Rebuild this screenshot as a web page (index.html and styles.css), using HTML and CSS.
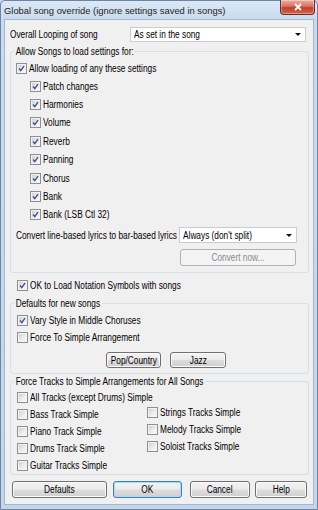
FILE: index.html
```html
<!DOCTYPE html>
<html lang="en">
<head>
    <meta charset="UTF-8">
    <title>Global song override</title>
    <link rel="stylesheet" href="styles.css">
</head>
<body>
    <div class="window">
        <div class="titlebar">
            <span class="title">Global song override (ignore settings saved in songs)</span>
            <span class="close">
                <svg viewBox="0 0 10 8" width="10" height="8"><path d="M2 1 L8 7 M8 1 L2 7"/></svg>
            </span>
        </div>

        <div class="client">
            <div class="row looping">
                <span class="t">Overall Looping of song</span>
                <div class="combo combo-looping"><span class="t">As set in the song</span><i class="arrow"></i></div>
            </div>

            <!-- Allow songs to load settings -->
            <div class="group group-allow">
                <div class="group-title"><span class="t">Allow Songs to load settings for:</span></div>
                <label class="check"><span class="box checked"><svg viewBox="0 0 11 11"><path d="M2.5 5.5 L4.6 8 L8.6 2.6"/></svg></span><span class="t">Allow loading of any these settings</span></label>
                <div class="sublist">
                    <label class="check"><span class="box checked"><svg viewBox="0 0 11 11"><path d="M2.5 5.5 L4.6 8 L8.6 2.6"/></svg></span><span class="t">Patch changes</span></label>
                    <label class="check"><span class="box checked"><svg viewBox="0 0 11 11"><path d="M2.5 5.5 L4.6 8 L8.6 2.6"/></svg></span><span class="t">Harmonies</span></label>
                    <label class="check"><span class="box checked"><svg viewBox="0 0 11 11"><path d="M2.5 5.5 L4.6 8 L8.6 2.6"/></svg></span><span class="t">Volume</span></label>
                    <label class="check"><span class="box checked"><svg viewBox="0 0 11 11"><path d="M2.5 5.5 L4.6 8 L8.6 2.6"/></svg></span><span class="t">Reverb</span></label>
                    <label class="check"><span class="box checked"><svg viewBox="0 0 11 11"><path d="M2.5 5.5 L4.6 8 L8.6 2.6"/></svg></span><span class="t">Panning</span></label>
                    <label class="check"><span class="box checked"><svg viewBox="0 0 11 11"><path d="M2.5 5.5 L4.6 8 L8.6 2.6"/></svg></span><span class="t">Chorus</span></label>
                    <label class="check"><span class="box checked"><svg viewBox="0 0 11 11"><path d="M2.5 5.5 L4.6 8 L8.6 2.6"/></svg></span><span class="t">Bank</span></label>
                    <label class="check"><span class="box checked"><svg viewBox="0 0 11 11"><path d="M2.5 5.5 L4.6 8 L8.6 2.6"/></svg></span><span class="t">Bank (LSB Ctl 32)</span></label>
                </div>
                <div class="row convert">
                    <span class="t">Convert line-based lyrics to bar-based lyrics</span>
                    <div class="combo combo-lyrics"><span class="t">Always (don't split)</span><i class="arrow"></i></div>
                </div>
                <div class="row convert-now">
                    <span class="btn disabled"><span class="t">Convert now...</span></span>
                </div>
            </div>

            <label class="check notation"><span class="box checked"><svg viewBox="0 0 11 11"><path d="M2.5 5.5 L4.6 8 L8.6 2.6"/></svg></span><span class="t">OK to Load Notation Symbols with songs</span></label>

            <!-- Defaults for new songs -->
            <div class="group group-defaults">
                <div class="group-title"><span class="t">Defaults for new songs</span></div>
                <label class="check"><span class="box checked"><svg viewBox="0 0 11 11"><path d="M2.5 5.5 L4.6 8 L8.6 2.6"/></svg></span><span class="t">Vary Style in Middle Choruses</span></label>
                <label class="check"><span class="box"></span><span class="t">Force To Simple Arrangement</span></label>
                <div class="row style-buttons">
                    <span class="btn btn-pop"><span class="t">Pop/Country</span></span>
                    <span class="btn btn-jazz"><span class="t">Jazz</span></span>
                </div>
            </div>

            <!-- Force tracks -->
            <div class="group group-tracks">
                <div class="group-title"><span class="t">Force Tracks to Simple Arrangements for All Songs</span></div>
                <label class="check"><span class="box"></span><span class="t">All Tracks (except Drums) Simple</span></label>
                <div class="track-cols">
                    <div class="track-col left">
                        <label class="check"><span class="box"></span><span class="t">Bass Track Simple</span></label>
                        <label class="check"><span class="box"></span><span class="t">Piano Track Simple</span></label>
                        <label class="check"><span class="box"></span><span class="t">Drums Track Simple</span></label>
                        <label class="check"><span class="box"></span><span class="t">Guitar Tracks Simple</span></label>
                    </div>
                    <div class="track-col right">
                        <label class="check"><span class="box"></span><span class="t">Strings Tracks Simple</span></label>
                        <label class="check"><span class="box"></span><span class="t">Melody Tracks Simple</span></label>
                        <label class="check"><span class="box"></span><span class="t">Soloist Tracks Simple</span></label>
                    </div>
                </div>
            </div>

            <div class="row footer">
                <span class="btn btn-defaults"><span class="t">Defaults</span></span>
                <span class="btn btn-ok default"><span class="t">OK</span></span>
                <span class="btn btn-cancel"><span class="t">Cancel</span></span>
                <span class="btn btn-help"><span class="t">Help</span></span>
            </div>
        </div>
    </div>
</body>
</html>
```

FILE: styles.css
```css
* {
    box-sizing: border-box;
}

body {
    margin: 0;
    width: 318px;
    height: 510px;
    overflow: hidden;
    background: #c4d7ed;
    font-family: "Liberation Sans", Arial, sans-serif;
    font-size: 10px;
    color: #000;
}

/* Dialog text is a narrow face: squeeze it horizontally */
.t {
    display: inline-block;
    white-space: nowrap;
    transform: scaleX(0.83);
    transform-origin: left center;
}

/* Window frame */
.window {
    position: relative;
    width: 318px;
    height: 510px;
    display: flex;
    flex-direction: column;
    border: 1px solid #6e86a4;
    border-radius: 5px 5px 0 0;
    background: linear-gradient(#dce8f6, #c9dbef 18px, #c3d6ec);
}

.titlebar {
    height: 18px;
    display: flex;
    align-items: center;
    padding-left: 3px;
    font-size: 9.4px;
    color: #1e1e1e;
}

.close {
    position: absolute;
    top: -1px;
    right: 2px;
    width: 35px;
    height: 15px;
    display: flex;
    align-items: center;
    justify-content: center;
    border: 1px solid #6c2a22;
    border-top: none;
    border-radius: 0 0 4px 4px;
    background: linear-gradient(#eab0a3, #d7725f 45%, #c33f29 55%, #d3644b);
    box-shadow: inset 0 0 0 1px rgba(255, 255, 255, 0.35);
}

.close svg path {
    stroke: #fff;
    stroke-width: 1.8;
    fill: none;
}

.client {
    flex: 1;
    margin: 0 3px 4px;
    padding: 7px 6px 0 5px;
    background: #f0f0f0;
    border: 1px solid #a3b7cf;
}

.row {
    display: flex;
    align-items: center;
}

/* Combo boxes */
.combo {
    display: flex;
    align-items: center;
    height: 15px;
    padding-left: 3px;
    background: #fff;
    border: 1px solid #c9ccd0;
}

.arrow {
    margin-left: auto;
    margin-right: 4px;
    border-left: 3px solid transparent;
    border-right: 3px solid transparent;
    border-top: 3px solid #111;
}

.looping {
    height: 15px;
}

.combo-looping {
    width: 176px;
    margin-left: auto;
    margin-right: 1px;
}

/* Group boxes */
.group {
    margin: 9px -2px 0 0;
    padding: 0 12px 6px 5px;
    border: 1px solid #d5dfe5;
    border-radius: 3px;
}

.group-title {
    display: flex;
    height: 12px;
    margin: -6px 0 1px -2px;
    line-height: 12px;
}

.group-title .t {
    padding: 0 2px;
    background: #f0f0f0;
}

/* Checkboxes */
.check {
    display: flex;
    align-items: center;
    height: 18px;
}

.box {
    width: 11px;
    height: 11px;
    flex: none;
    margin-right: 2px;
    border: 1px solid #8e8f8f;
    background: linear-gradient(135deg, #c7cace, #eeeff0 60%, #fafafa);
    box-shadow: inset 0 0 0 1px #f2f2f2;
}

.box svg {
    display: block;
    width: 9px;
    height: 9px;
}

.box svg path {
    fill: none;
    stroke: #3c5488;
    stroke-width: 1.7;
}

.sublist {
    padding-left: 14px;
}

.sublist .check {
    height: 18.4px;
}

.convert {
    margin-top: 3px;
    height: 16px;
}

.convert > .t {
    flex: 0 1 auto;
    min-width: 0;
}

.combo-lyrics {
    width: 118px;
    height: 16px;
    flex: none;
    margin-left: auto;
    margin-right: -1px;
}

.convert-now {
    margin-top: 6px;
    justify-content: flex-end;
}

/* Buttons */
.btn {
    display: flex;
    align-items: center;
    justify-content: center;
    height: 17px;
    border: 1px solid #707070;
    border-radius: 3px;
    background: linear-gradient(#f3f3f3, #ebebeb 48%, #dddddd 52%, #cfcfcf);
    box-shadow: inset 0 0 0 1px #fbfbfb;
}

.btn .t {
    transform-origin: center;
}

.btn.disabled {
    width: 116px;
    color: #8a8a8a;
    border-color: #adb2b5;
    background: #f4f4f4;
    box-shadow: none;
}

.btn.default {
    border-color: #3c7fb1;
    box-shadow: inset 0 0 0 1px #a9dcf6;
}

.notation {
    margin-top: 3px;
    padding-left: 7px;
}

.group-defaults {
    padding: 0 12px 5px 6px;
}

.group-defaults .group-title {
    margin-left: -3px;
    margin-bottom: 2px;
}

.group-defaults .check {
    height: 17px;
}

.style-buttons {
    margin-top: 6px;
    padding-left: 89px;
    gap: 9px;
}

.btn-pop {
    width: 55px;
    height: 16px;
}

.btn-jazz {
    width: 56px;
    height: 16px;
}

.group-tracks {
    margin-top: 7px;
    padding: 0 12px 0 6px;
}

.group-tracks .group-title {
    margin-left: -3px;
}

.group-tracks .check {
    height: 17px;
}

.track-cols {
    display: flex;
}

.track-col.left {
    width: 130px;
}

.track-col.right {
    margin-top: -2px;
}

/* Bottom buttons */
.footer {
    margin-top: 6px;
    padding-left: 2px;
}

.btn-defaults {
    width: 95px;
}

.btn-ok {
    width: 69px;
    margin-left: 6px;
}

.btn-cancel {
    width: 60px;
    margin-left: 8px;
}

.btn-help {
    width: 52px;
    margin-left: 5px;
}
```
